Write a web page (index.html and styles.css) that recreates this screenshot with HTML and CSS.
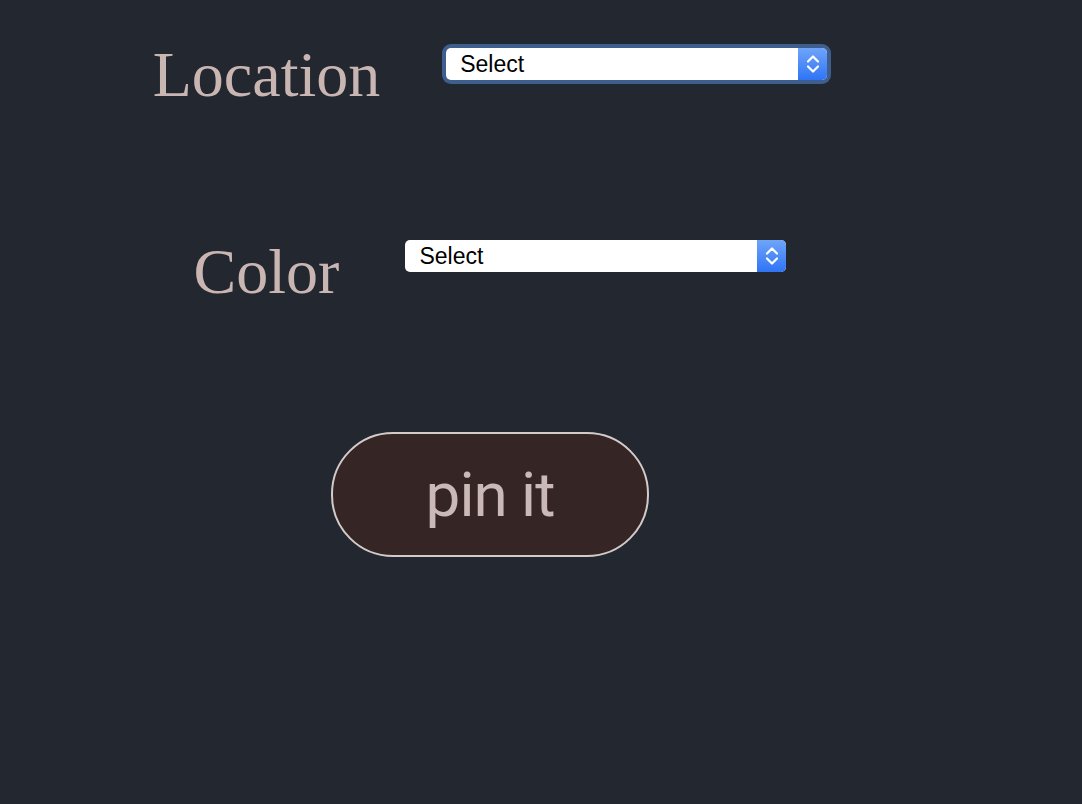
FILE: index.html
```html
<!DOCTYPE html>
<html lang="en">
<head>
<meta charset="utf-8">
<title>pin it</title>
<link rel="stylesheet" href="styles.css">
</head>
<body>
<main class="form">
  <div class="row row-location">
    <label class="label" for="location">Location</label>
    <div class="select-wrap is-focused">
      <select id="location" class="select"><option>Select</option></select>
      <span class="arrow"><svg width="14" height="20" viewBox="0 0 14 20"><path d="M2 7.5 L7 2.5 L12 7.5 M2 12.5 L7 17.5 L12 12.5" fill="none" stroke="#fff" stroke-width="2.2" stroke-linecap="round" stroke-linejoin="round"/></svg></span>
    </div>
  </div>
  <div class="row row-color">
    <label class="label" for="color">Color</label>
    <div class="select-wrap">
      <select id="color" class="select"><option>Select</option></select>
      <span class="arrow"><svg width="14" height="20" viewBox="0 0 14 20"><path d="M2 7.5 L7 2.5 L12 7.5 M2 12.5 L7 17.5 L12 12.5" fill="none" stroke="#fff" stroke-width="2.2" stroke-linecap="round" stroke-linejoin="round"/></svg></span>
    </div>
  </div>
  <button class="pin" type="button">pin it</button>
</main>
</body>
</html>
```

FILE: styles.css
```css
html, body {
  margin: 0;
  padding: 0;
  background: #23272f;
  height: 100%;
}

.form {
  width: 980px;
  display: flex;
  flex-direction: column;
  align-items: center;
}

.row {
  display: flex;
  align-items: flex-start;
  gap: 66px;
}

.row-location {
  margin-top: 43px;
}

.row-color {
  margin-top: 133px;
}

.label {
  font-family: "Liberation Serif", "Times New Roman", serif;
  font-size: 64px;
  line-height: 64px;
  color: #c9b6b3;
}

.select-wrap {
  position: relative;
  width: 381px;
  height: 32px;
  border-radius: 5px;
  background: #ffffff;
}

.row-location .select-wrap {
  margin-top: 5px;
}

.select-wrap.is-focused {
  box-shadow: 0 0 0 4px #3e5f8e;
}

.select {
  -webkit-appearance: none;
  appearance: none;
  display: block;
  width: 100%;
  height: 100%;
  margin: 0;
  border: none;
  border-radius: 5px;
  background: transparent;
  padding: 0 0 0 14px;
  font-family: "Liberation Sans", Arial, sans-serif;
  font-size: 23px;
  color: #000;
  outline: none;
}

.arrow {
  position: absolute;
  top: 0;
  right: 0;
  width: 29px;
  height: 32px;
  border-radius: 0 5px 5px 0;
  background: linear-gradient(#6fa4f8, #2f74f5);
  display: flex;
  align-items: center;
  justify-content: center;
  pointer-events: none;
}

.pin {
  margin-top: 128px;
  width: 318px;
  height: 125px;
  box-sizing: border-box;
  border: 2px solid #d3cbca;
  border-radius: 62px;
  background: #352625;
  color: #cbb9b7;
  font-family: Roboto, "Noto Sans", sans-serif;
  font-size: 62px;
  letter-spacing: -1px;
  padding: 0;
  cursor: pointer;
}
```
